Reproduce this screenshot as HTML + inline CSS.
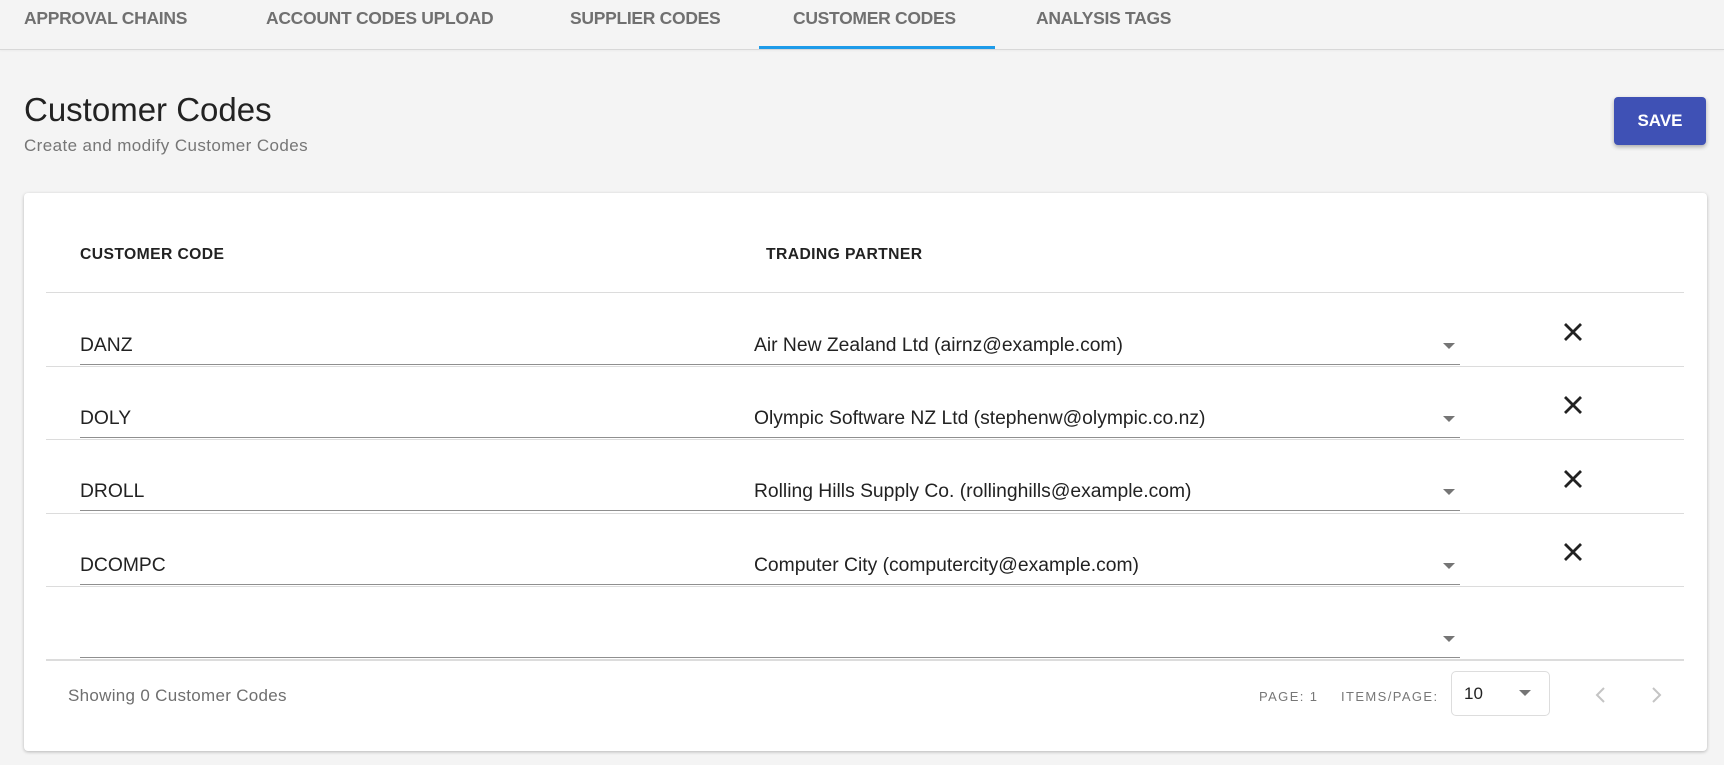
<!DOCTYPE html>
<html><head><meta charset="utf-8"><style>
*{box-sizing:border-box;margin:0;padding:0}
body{width:1724px;height:765px;background:#f4f4f4;font-family:"Liberation Sans",Arial,sans-serif;position:relative;overflow:hidden;color:#212121}
.abs{position:absolute}
.tabs{position:absolute;left:0;top:0;width:1724px;height:50px;border-bottom:1px solid #d8d8d8;box-shadow:0 1px 2px rgba(0,0,0,.04)}
.tab{position:absolute;top:6px;font-size:17.5px;font-weight:bold;color:#707070;line-height:24px;letter-spacing:-0.3px}
.ul{position:absolute;left:759px;width:236px;top:46px;height:3px;background:#1e9be9}
h1{position:absolute;left:24px;top:91px;font-size:33px;font-weight:normal;color:#222}
.sub{position:absolute;left:24px;top:136px;font-size:17px;color:#767676;letter-spacing:0.4px}
.save{position:absolute;left:1614px;top:97px;width:92px;height:48px;background:#3f51b5;color:#fff;border-radius:4px;font-size:17px;font-weight:bold;text-align:center;line-height:48px;box-shadow:0 2px 4px rgba(0,0,0,.3)}
.card{position:absolute;left:24px;top:193px;width:1683px;height:558px;background:#fff;border-radius:4px;box-shadow:0 1px 3px rgba(0,0,0,.25)}
.th{position:absolute;top:246px;font-size:15.7px;font-weight:bold;color:#222;letter-spacing:0.4px}
.line{position:absolute;left:46px;width:1638px;height:1px;background:#dcdcdc}
.inp{position:absolute;left:80px;width:1380px;height:1px;background:#8f8f8f}
.cell{position:absolute;font-size:19.3px;color:#222}
.arr{position:absolute;left:1443px;width:0;height:0;border-left:6px solid transparent;border-right:6px solid transparent;border-top:6px solid #757575}
.x{position:absolute;left:1563px;width:20px;height:20px}
.foot{position:absolute;font-size:17px;color:#6f6f6f;letter-spacing:0.3px}
.sm{position:absolute;font-size:13px;color:#777;letter-spacing:1.4px}
</style></head><body>
<div class="tabs"></div>
<div class="tab" style="left:24px">APPROVAL CHAINS</div>
<div class="tab" style="left:266px">ACCOUNT CODES UPLOAD</div>
<div class="tab" style="left:570px">SUPPLIER CODES</div>
<div class="tab" style="left:793px">CUSTOMER CODES</div>
<div class="tab" style="left:1036px">ANALYSIS TAGS</div>
<div class="ul"></div>
<h1>Customer Codes</h1>
<div class="sub">Create and modify Customer Codes</div>
<div class="save">SAVE</div>
<div class="card"></div>
<div class="th" style="left:80px">CUSTOMER CODE</div>
<div class="th" style="left:766px">TRADING PARTNER</div>
<div class="line" style="top:292px"></div>

<div class="cell" style="left:80px;top:335px">DANZ</div>
<div class="cell" style="left:754px;top:335px">Air New Zealand Ltd (airnz@example.com)</div>
<div class="arr" style="top:343px"></div>
<div class="inp" style="top:364px"></div>
<div class="line" style="top:366px"></div>
<svg class="x" style="top:322px" viewBox="0 0 20 20"><path d="M2 2L18 18M18 2L2 18" stroke="#222" stroke-width="2.8"/></svg>

<div class="cell" style="left:80px;top:408px">DOLY</div>
<div class="cell" style="left:754px;top:408px">Olympic Software NZ Ltd (stephenw@olympic.co.nz)</div>
<div class="arr" style="top:416px"></div>
<div class="inp" style="top:437px"></div>
<div class="line" style="top:439px"></div>
<svg class="x" style="top:395px" viewBox="0 0 20 20"><path d="M2 2L18 18M18 2L2 18" stroke="#222" stroke-width="2.8"/></svg>

<div class="cell" style="left:80px;top:481px">DROLL</div>
<div class="cell" style="left:754px;top:481px">Rolling Hills Supply Co. (rollinghills@example.com)</div>
<div class="arr" style="top:489px"></div>
<div class="inp" style="top:510px"></div>
<div class="line" style="top:513px"></div>
<svg class="x" style="top:469px" viewBox="0 0 20 20"><path d="M2 2L18 18M18 2L2 18" stroke="#222" stroke-width="2.8"/></svg>

<div class="cell" style="left:80px;top:555px">DCOMPC</div>
<div class="cell" style="left:754px;top:555px">Computer City (computercity@example.com)</div>
<div class="arr" style="top:563px"></div>
<div class="inp" style="top:584px"></div>
<div class="line" style="top:586px"></div>
<svg class="x" style="top:542px" viewBox="0 0 20 20"><path d="M2 2L18 18M18 2L2 18" stroke="#222" stroke-width="2.8"/></svg>

<div class="arr" style="top:636px"></div>
<div class="inp" style="top:657px"></div>
<div class="line" style="top:659px;height:2px"></div>

<div class="foot" style="left:68px;top:686px">Showing 0 Customer Codes</div>
<div class="sm" style="left:1259px;top:689px">PAGE: 1</div>
<div class="sm" style="left:1341px;top:689px">ITEMS/PAGE:</div>
<div class="abs" style="left:1451px;top:671px;width:99px;height:45px;border:1px solid #ddd;border-radius:5px"></div>
<div class="cell" style="left:1464px;top:684px;font-size:17px">10</div>
<div class="arr" style="left:1519px;top:690px"></div>
<svg class="abs" style="left:1593px;top:685px" width="16" height="20" viewBox="0 0 16 20"><path d="M11 3L4 10L11 17" stroke="#c4c4c4" stroke-width="2" fill="none"/></svg>
<svg class="abs" style="left:1648px;top:685px" width="16" height="20" viewBox="0 0 16 20"><path d="M5 3L12 10L5 17" stroke="#c4c4c4" stroke-width="2" fill="none"/></svg>
</body></html>
